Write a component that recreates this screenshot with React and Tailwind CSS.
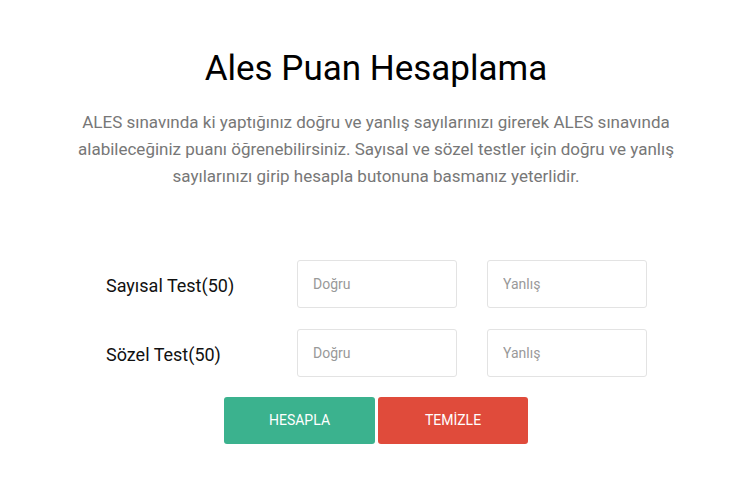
import React, { useState } from 'react';

const rows = [
  { label: 'Sayısal Test(50)' },
  { label: 'Sözel Test(50)' },
];

const App = () => {
  const [values, setValues] = useState({});

  const update = (key, v) => setValues((prev) => ({ ...prev, [key]: v }));

  return (
    <div className="min-h-screen bg-white pt-[48px] text-center" style={{ fontFamily: 'Roboto, "Liberation Sans", sans-serif' }}>
      <h1 className="text-[35px] leading-[42px] font-normal text-black pl-[2px]">Ales Puan Hesaplama</h1>
      <p className="mx-auto mt-[19px] w-[620px] pl-[2px] text-[17px] leading-[27px] text-[#777]">
        ALES sınavında ki yaptığınız doğru ve yanlış sayılarınızı girerek ALES sınavında alabileceğiniz puanı öğrenebilirsiniz. Sayısal ve sözel testler için doğru ve yanlış sayılarınızı girip hesapla butonuna basmanız yeterlidir.
      </p>

      <div className="mx-auto mt-[70px] w-[574px] pl-[4px] text-left">
        {rows.map((row, i) => (
          <div key={row.label} className={`grid grid-cols-3 ${i > 0 ? 'mt-[21px]' : ''}`}>
            <div className="flex items-center px-[14px] pt-[2px] text-[18px] text-[#111]">{row.label}</div>
            <div className="px-[15px]">
              <input
                type="text"
                placeholder="Doğru"
                value={values[`${i}d`] || ''}
                onChange={(e) => update(`${i}d`, e.target.value)}
                className="h-[48px] w-full rounded-[3px] border border-[#e3e3e3] px-[15px] text-[14px] text-[#333] outline-none placeholder:text-[#999]"
              />
            </div>
            <div className="px-[15px]">
              <input
                type="text"
                placeholder="Yanlış"
                value={values[`${i}y`] || ''}
                onChange={(e) => update(`${i}y`, e.target.value)}
                className="h-[48px] w-full rounded-[3px] border border-[#e3e3e3] px-[15px] text-[14px] text-[#333] outline-none placeholder:text-[#999]"
              />
            </div>
          </div>
        ))}
      </div>

      <div className="mt-[20px] flex justify-center gap-[3px] pl-[2px]">
        <button className="h-[47px] w-[151px] rounded-[3px] bg-[#3bb28e] text-[14px] text-white">HESAPLA</button>
        <button
          onClick={() => setValues({})}
          className="h-[47px] w-[150px] rounded-[3px] bg-[#e04b3b] text-[14px] text-white"
        >
          TEMİZLE
        </button>
      </div>
    </div>
  );
};

export default App;
